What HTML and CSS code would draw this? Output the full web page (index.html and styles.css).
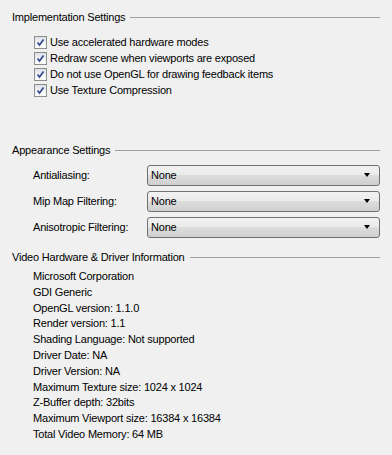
FILE: index.html
```html
<!DOCTYPE html>
<html lang="en">

<head>
  <meta charset="UTF-8">
  <title>Display Settings</title>
  <link rel="stylesheet" href="styles.css">
</head>

<body>
  <div class="panel">
    <div class="group-title"><span>Implementation Settings</span><div class="rule"></div></div>
    <div class="checks">
      <label class="check"><span class="box"><svg viewBox="0 0 9 9" width="9" height="9"><path d="M1.5 4.5 L3.5 7 L7.5 1.5" fill="none" stroke="#3b4f8c" stroke-width="1.8"/></svg></span>Use accelerated hardware modes</label>
      <label class="check"><span class="box"><svg viewBox="0 0 9 9" width="9" height="9"><path d="M1.5 4.5 L3.5 7 L7.5 1.5" fill="none" stroke="#3b4f8c" stroke-width="1.8"/></svg></span>Redraw scene when viewports are exposed</label>
      <label class="check"><span class="box"><svg viewBox="0 0 9 9" width="9" height="9"><path d="M1.5 4.5 L3.5 7 L7.5 1.5" fill="none" stroke="#3b4f8c" stroke-width="1.8"/></svg></span>Do not use OpenGL for drawing feedback items</label>
      <label class="check"><span class="box"><svg viewBox="0 0 9 9" width="9" height="9"><path d="M1.5 4.5 L3.5 7 L7.5 1.5" fill="none" stroke="#3b4f8c" stroke-width="1.8"/></svg></span>Use Texture Compression</label>
    </div>

    <div class="group-title appearance"><span>Appearance Settings</span><div class="rule"></div></div>
    <div class="selects">
      <div class="select-row"><span class="label">Antialiasing:</span><div class="combo"><span>None</span><span class="arrow"></span></div></div>
      <div class="select-row"><span class="label">Mip Map Filtering:</span><div class="combo"><span>None</span><span class="arrow"></span></div></div>
      <div class="select-row"><span class="label">Anisotropic Filtering:</span><div class="combo"><span>None</span><span class="arrow"></span></div></div>
    </div>

    <div class="group-title video"><span>Video Hardware &amp; Driver Information</span><div class="rule"></div></div>
    <div class="info">
      <div>Microsoft Corporation</div>
      <div>GDI Generic</div>
      <div>OpenGL version: 1.1.0</div>
      <div>Render version: 1.1</div>
      <div>Shading Language: Not supported</div>
      <div>Driver Date: NA</div>
      <div>Driver Version: NA</div>
      <div>Maximum Texture size: 1024 x 1024</div>
      <div>Z-Buffer depth: 32bits</div>
      <div>Maximum Viewport size: 16384 x 16384</div>
      <div>Total Video Memory: 64 MB</div>
    </div>
  </div>
</body>

</html>
```

FILE: styles.css
```css
* {
  margin: 0;
  padding: 0;
  box-sizing: border-box;
}

body {
  background-color: #f0f0f0;
  font-family: 'Liberation Sans', Arial, sans-serif;
  font-size: 11px;
  letter-spacing: -0.2px;
  color: #000;
}

.panel {
  padding: 9px 12px 0 12px;
}

.group-title {
  display: flex;
  align-items: center;
  height: 16px;
  line-height: 16px;
}

.group-title .rule {
  flex: 1;
  border-top: 1px solid #a0a0a0;
  margin-left: 5px;
}

.checks {
  margin-top: 9px;
  padding-left: 22px;
}

.check {
  display: flex;
  align-items: center;
  height: 16px;
  gap: 3px;
}

.box {
  width: 13px;
  height: 13px;
  border: 1px solid #8e8f8f;
  background: linear-gradient(#dcdcdc, #fdfdfd);
  display: flex;
  align-items: center;
  justify-content: center;
  padding: 1px;
}

.box svg {
  background: linear-gradient(#dfe6f2, #ffffff);
}

.appearance {
  margin-top: 44px;
}

.selects {
  margin-top: 4px;
  padding-left: 21px;
}

.select-row {
  display: flex;
  align-items: center;
  height: 26px;
}

.label {
  width: 114px;
}

.combo {
  flex: 1;
  height: 21px;
  border: 1px solid #707070;
  border-radius: 3px;
  background: linear-gradient(#f2f2f2 0%, #ebebeb 45%, #dddddd 50%, #cfcfcf 100%);
  display: flex;
  align-items: center;
  justify-content: space-between;
  padding: 0 9px 0 3px;
}

.arrow {
  width: 0;
  height: 0;
  border-left: 3.5px solid transparent;
  border-right: 3.5px solid transparent;
  border-top: 4px solid #000;
}

.video {
  margin-top: 9px;
}

.info {
  margin-top: 4px;
  padding-left: 21px;
}

.info div {
  height: 15.8px;
  line-height: 15.8px;
}
```
